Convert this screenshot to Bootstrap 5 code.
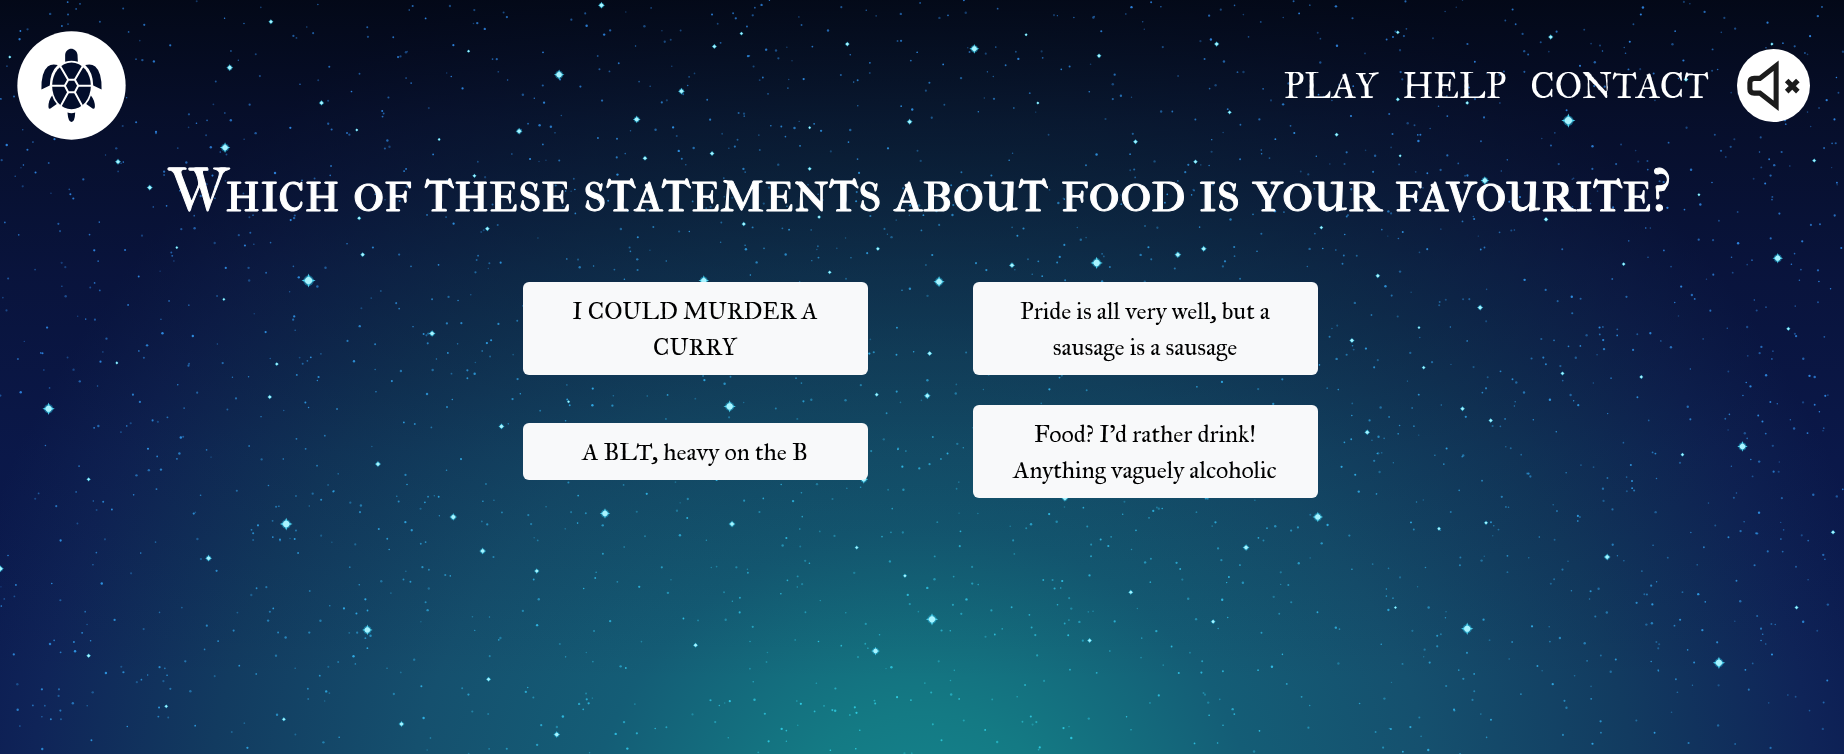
<!DOCTYPE html>
<html lang="en">
<head>
<meta charset="utf-8">
<meta name="viewport" content="width=device-width, initial-scale=1">
<title>Quiz</title>
<link href="https://cdn.jsdelivr.net/npm/bootstrap@5.3.0/dist/css/bootstrap.min.css" rel="stylesheet">
<style>
  body {
    font-family: "IM Fell Great Primer", "Liberation Serif", serif;
    color: #fff;
    background:
      linear-gradient(to bottom, rgba(2,6,16,.88) 0%, rgba(4,8,22,.64) 16%, rgba(6,10,30,.4) 36%, rgba(8,14,40,.18) 60%, rgba(8,14,40,0) 90%),
      radial-gradient(ellipse 54% 130% at 50% 114%, #148890 0%, #147a84 15%, #145d76 34%, #15506e 52%, #123b60 72%, #0f2458 90%, #0b1a50 100%);
    background-attachment: fixed;
  }
  .night-sky { position: fixed; inset: 0; width: 100%; height: 100%; z-index: -1; }
  .site-header { padding: 31px 34px 0 17px; }
  .logo-mark { width: 109px; height: 109px; }
  .site-menu { gap: 24px; }
  .site-menu a { font-size: 36px; line-height: 48px; color: #fff; text-decoration: none; }
  .sound-btn { width: 73px; height: 73px; }
  .question { font-family: "IM Fell French Canon SC", "IM Fell Great Primer", "Liberation Serif", serif; font-size: 60px; line-height: 78px; font-weight: 400; margin: 13px 0 0; -webkit-text-stroke: 1px #fff; }
  .quiz { padding: 0 4px 48px 0; }
  .answers { display: grid; grid-template-columns: repeat(2, minmax(0, 1fr)); gap: 30px 105px; max-width: 795px; margin-top: 51px; }
  .answer { font-size: 24px; line-height: 36px; padding: 11px 32px 10px; border: 0; border-radius: 6px; color: #000; }
  @media (max-width: 700px) { .answers { grid-template-columns: 1fr; } .site-header { flex-wrap: wrap; } }
</style>
</head>
<body class="min-vh-100">
<svg class="night-sky" id="sky" viewBox="0 0 1568 641" preserveAspectRatio="xMidYMid slice" aria-hidden="true"></svg>

<header class="site-header d-flex align-items-center justify-content-between">
  <a href="#" aria-label="Home" class="d-block">
    <svg class="logo-mark d-block" viewBox="52 32 326 326" aria-hidden="true">
      <circle cx="215" cy="195" r="162" fill="#fff"/>
      <g fill="#020d2b">
        <path d="M196 124V103C197 92 205 85 214 85S232 92 233 103L234 124Q215 118 196 124Z"/>
        <path d="M174 134Q151 155 150 195L125 207Q124 155 144 138Q156 129 174 134Z"/>
        <path d="M256 134Q279 155 280 195L305 207Q306 155 286 138Q274 129 256 134Z"/>
        <path d="M157 225Q161 240 171 250L152 264Q146 267 146 258Q146 240 157 225Z"/>
        <path d="M273 225Q269 240 259 250L278 264Q285 267 285 258Q285 240 273 225Z"/>
        <path d="M203 276Q215 280 226 276Q225 304 215 304T203 276Z"/>
        <ellipse cx="215" cy="196" rx="58" ry="70"/>
      </g>
      <g fill="none" stroke="#fff" stroke-width="6">
        <path d="M205 178H225L235 196L225 215H205L195 196Z"/>
        <path d="M205 178L181 137M225 178L249 137M235 196H275M225 215L247 256M205 215L183 256M195 196H155"/>
      </g>
    </svg>
  </a>
  <div class="d-flex align-items-center">
    <nav class="site-menu d-flex me-4 pe-1">
      <a href="#">PLAY</a>
      <a href="#">HELP</a>
      <a href="#">CONTACT</a>
    </nav>
    <button type="button" class="sound-btn btn p-0 border-0 rounded-circle" aria-label="Turn sound on">
      <svg class="d-block w-100 h-100" viewBox="0 0 72 72" aria-hidden="true">
        <circle cx="36" cy="36" r="36" fill="#fff"/>
        <path d="M38.600 16.500V56L22.500 43.500H17Q12.700 43.500 12.700 39.500V33Q12.700 29 17 29H22.500Z" fill="none" stroke="#1c1c1c" stroke-width="5"/>
        <path d="M49 31L60 42M60 31L49 42" fill="none" stroke="#1c1c1c" stroke-width="5"/>
      </svg>
    </button>
  </div>
</header>

<main class="quiz">
  <h1 class="question text-center">Which of these statements about food is your favourite?</h1>
  <div class="answers align-items-center mx-auto">
    <button type="button" class="answer btn btn-light">I COULD MURDER A CURRY</button>
    <button type="button" class="answer btn btn-light">Pride is all very well, but a sausage is a sausage</button>
    <button type="button" class="answer btn btn-light">A BLT, heavy on the B</button>
    <button type="button" class="answer btn btn-light">Food? I’d rather drink! Anything vaguely alcoholic</button>
  </div>
</main>

<script src="https://cdn.jsdelivr.net/npm/bootstrap@5.3.0/dist/js/bootstrap.bundle.min.js"></script>
<script>
  // Bright stars: x, y, radius
  const bright = [[511,4,2],[230,18,1.5],[195,57,2],[8,48,1],[475,63,3],[607,39,1.5],[630,28,1.2],[720,37,1.5],[398,43,1],[579,77,2],[541,101,2.2],[441,111,2],[273,87,1.6],[303,110,1],[191,125,3],[100,137,1.8],[127,159,1.8],[373,118,1],[548,134,1.5],[605,130,1.5],[688,108,1],[688,143,1.3],[773,103,1.8],[305,185,1.3],[403,149,1.3],[414,194,1.5],[632,190,1.4],[696,184,1.2],[308,216,1.5],[150,210,1],[262,238,4],[598,238,3],[746,211,1.3],[705,231,1.2],[367,283,2],[190,254,1],[235,309,1.2],[99,308,1],[229,337,1.4],[41,347,3.5],[620,345,3.5],[745,335,1.3],[483,341,1],[426,362,1.8],[321,394,1.8],[75,407,1.3],[734,407,2.5],[243,445,3.6],[514,436,3],[385,439,2.2],[622,445,2],[410,468,2],[177,474,2],[456,485,1.6],[0,483,2],[728,465,1.3],[769,489,1.3],[312,535,3],[591,548,1.5],[744,553,2.5],[75,557,1.4],[415,577,1.5],[141,600,1.2],[241,611,1.3],[341,615,1.8],[473,624,2],
  [828,41,2.8],[872,29,1],[934,47,1.5],[1034,37,1.6],[1188,27,1.2],[1318,31,1.6],[1506,37,1],[882,87,1],[1045,95,1.3],[965,120,1.5],[1136,114,1.3],[1333,102,4],[1188,84,1.3],[1247,87,1.2],[1433,67,1.5],[1016,137,1.4],[1262,153,2.5],[1314,186,1.5],[1123,193,1.2],[1444,165,1],[1542,136,1.3],[1190,132,1],[1511,219,3],[860,225,1.8],[932,223,3.5],[1001,216,2],[1023,211,1.8],[798,239,3.2],[1171,234,1.5],[1380,224,1.2],[1258,261,1.8],[1149,289,1.6],[1206,278,1],[1520,279,1.3],[790,300,1.6],[788,336,2],[1210,312,1.2],[1328,317,1.3],[1395,320,1.3],[1243,347,1.5],[1267,357,1.4],[1481,379,3],[1162,367,1.7],[1430,386,1.2],[1120,439,3],[1263,444,1.3],[1223,449,1.3],[1059,465,2],[1558,452,1.4],[1366,473,2],[961,503,1.5],[905,423,2],[792,526,3.5],[1031,528,1.5],[1186,516,1],[1527,516,1.3],[926,544,1.5],[1247,534,3.5],[1461,563,3.5]];

  // Faint stars come from a seeded generator; they turn cyan towards the glow at the bottom
  let seed = 42;
  const rnd = () => (seed = (seed * 16807) % 2147483647) / 2147483647;
  let out = "";
  for (let i = 0; i < 2300; i++) {
    const x = rnd() * 1568, y = rnd() * 641;
    const d = Math.min(1, Math.hypot((x - 784) / 900, (y - 700) / 700));
    const r = 0.6 + rnd() * 0.45;
    out += `<circle cx="${x.toFixed(1)}" cy="${y.toFixed(1)}" r="${r.toFixed(2)}" fill="hsl(${Math.round(183 + d * 28)} 80% 55%)" opacity="${(0.35 + rnd() * 0.6).toFixed(2)}"/>`;
  }
  for (const [x, y, r] of bright) {
    const l = r * 1.5, w = r * 0.4;
    out += `<g transform="translate(${x + 0.5} ${y + 0.5})"><circle r="${r * 1.1}" fill="#21b4dc" opacity=".5"/>` +
      `<path d="M0 ${-l}L${w} ${-w}L${l} 0L${w} ${w}L0 ${l}L${-w} ${w}L${-l} 0L${-w} ${-w}Z" fill="#4fd2ee"/>` +
      `<circle r="${r * 0.75}" fill="#a8f4ff"/></g>`;
  }
  document.getElementById("sky").innerHTML = out;
</script>
</body>
</html>
